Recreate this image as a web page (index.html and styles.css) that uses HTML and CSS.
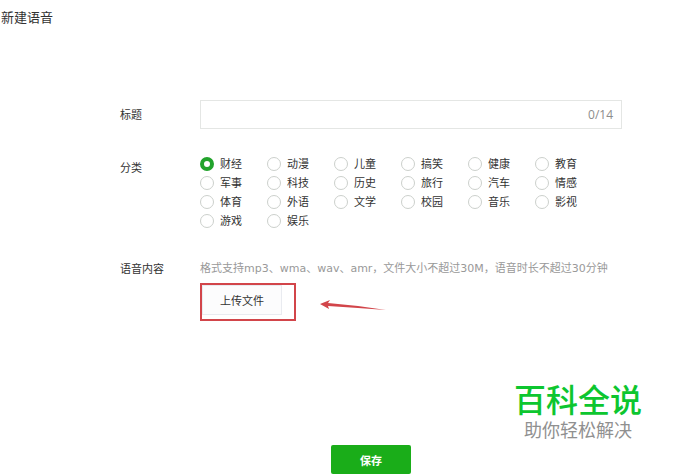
FILE: index.html
```html
<!DOCTYPE html>
<html lang="zh-CN">
<head>
    <meta charset="UTF-8">
    <meta name="viewport" content="width=device-width, initial-scale=1.0">
    <title>新建语音</title>
    <link rel="stylesheet" href="styles.css">
</head>
<body>

    <h1 class="page-title">新建语音</h1>

    <form class="voice-form">
        <div class="form-row">
            <label class="form-label title-label" for="title">标题</label>
            <div class="title-box">
                <input type="text" id="title" name="title" maxlength="14">
                <span class="counter">0/14</span>
            </div>
        </div>

        <div class="form-row category-row" role="radiogroup" aria-labelledby="category-label">
            <span class="form-label category-label" id="category-label">分类</span>
            <div class="category-list">
                <label><input type="radio" name="category" checked>财经</label>
                <label><input type="radio" name="category">动漫</label>
                <label><input type="radio" name="category">儿童</label>
                <label><input type="radio" name="category">搞笑</label>
                <label><input type="radio" name="category">健康</label>
                <label><input type="radio" name="category">教育</label>
                <label><input type="radio" name="category">军事</label>
                <label><input type="radio" name="category">科技</label>
                <label><input type="radio" name="category">历史</label>
                <label><input type="radio" name="category">旅行</label>
                <label><input type="radio" name="category">汽车</label>
                <label><input type="radio" name="category">情感</label>
                <label><input type="radio" name="category">体育</label>
                <label><input type="radio" name="category">外语</label>
                <label><input type="radio" name="category">文学</label>
                <label><input type="radio" name="category">校园</label>
                <label><input type="radio" name="category">音乐</label>
                <label><input type="radio" name="category">影视</label>
                <label><input type="radio" name="category">游戏</label>
                <label><input type="radio" name="category">娱乐</label>
            </div>
        </div>

        <div class="form-row upload-row">
            <span class="form-label">语音内容</span>
            <div>
                <p class="hint">格式支持mp3、wma、wav、amr，文件大小不超过30M，语音时长不超过30分钟</p>
                <div class="upload-area">
                    <div class="highlight">
                        <button type="button" class="upload-button">上传文件</button>
                    </div>
                    <svg class="arrow" width="66" height="24" viewBox="0 0 66 24" aria-hidden="true">
                        <path d="M0 14 L10 10 L8 13 L38 16 L66 20 L38 18 L8 16 L9 19 Z" fill="#d2454a"/>
                    </svg>
                </div>
            </div>
        </div>

        <button type="submit" class="save-button">保存</button>
    </form>

    <div class="brand">
        <strong>百科全说</strong>
        <span>助你轻松解决</span>
    </div>

</body>
</html>
```

FILE: styles.css
```css
body {
    font-family: "Open Sans", "Noto Sans CJK SC", sans-serif;
    font-size: 11px;
    line-height: 16px;
    color: #333;
    background-color: #fff;
    margin: 0;
}
button,
input {
    font-family: inherit;
    font-size: inherit;
    color: inherit;
    box-sizing: border-box;
    margin: 0;
}
.page-title {
    font-size: 13px;
    font-weight: normal;
    line-height: 20px;
    margin: 0;
    padding: 7px 1px;
}
.voice-form {
    display: flex;
    flex-direction: column;
    padding: 66px 70px 0 120px;
}
.form-row {
    display: grid;
    grid-template-columns: 80px 1fr;
}
.title-label {
    align-self: center;
}
.title-box {
    display: flex;
    align-items: center;
    height: 29px;
    box-sizing: border-box;
    border: 1px solid #e4e6e4;
    padding: 0 8px;
}
.title-box input {
    flex: 1;
    min-width: 0;
    border: none;
    outline: none;
    padding: 0;
    background: none;
}
.counter {
    font-size: 12px;
    color: #8c8c8c;
}
.category-row {
    margin-top: 27px;
}
.category-label {
    padding-top: 4px;
}
.category-list {
    display: grid;
    grid-template-columns: repeat(6, 67px);
    row-gap: 3px;
}
.category-list label {
    display: flex;
    align-items: center;
    gap: 6px;
    height: 16px;
}
.category-list input {
    appearance: none;
    width: 14px;
    height: 14px;
    border: 1px solid #ccd0cc;
    border-radius: 50%;
    background-color: #fff;
}
.category-list input:checked {
    border: 4px solid #22a32c;
}
.upload-row {
    margin-top: 32px;
}
.hint {
    margin: 0;
    color: #999;
    font-family: "DejaVu Sans", "Noto Sans CJK SC", sans-serif;
}
.upload-area {
    display: flex;
    align-items: center;
    gap: 24px;
    margin-top: 6px;
}
.highlight {
    width: 96px;
    height: 38px;
    box-sizing: border-box;
    border: 2px solid #d2454a;
}
.upload-button {
    width: 80px;
    height: 30px;
    padding: 0;
    border: 1px solid #e9ebf0;
    background-color: #fcfcfd;
}
.arrow {
    display: block;
}
.save-button {
    align-self: center;
    width: 80px;
    height: 29px;
    margin-top: 124px;
    padding: 0;
    border: none;
    border-radius: 2px;
    background-color: #1aad19;
    color: #fff;
    font-weight: bold;
}
/* Brand mark in the page corner */
.brand {
    position: absolute;
    right: 50px;
    bottom: 32px;
    display: flex;
    flex-direction: column;
    align-items: center;
    color: #909090;
    font-family: "Liberation Sans", "Noto Sans CJK SC", sans-serif;
    font-size: 18px;
    line-height: 24px;
}
.brand strong {
    color: #0dc62f;
    font-size: 32px;
    font-weight: 500;
    line-height: 36px;
}
```
